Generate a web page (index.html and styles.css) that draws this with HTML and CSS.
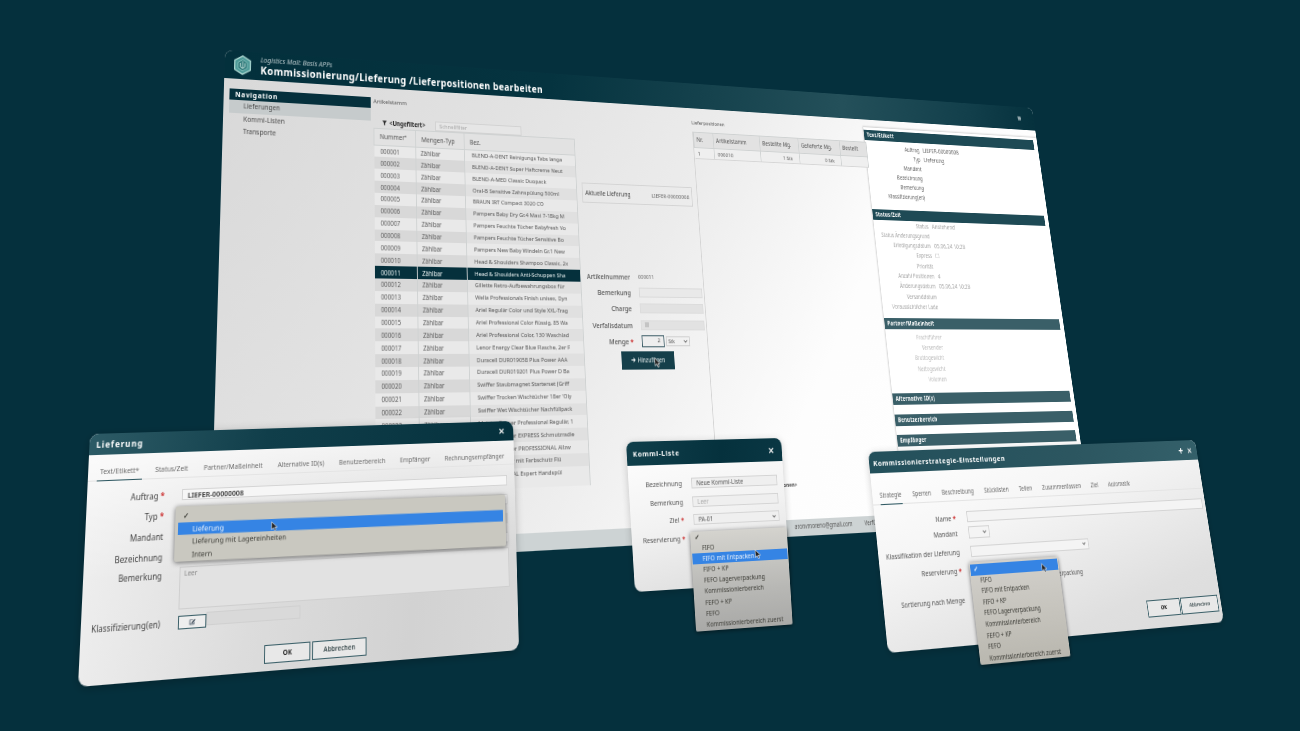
FILE: index.html
```html
<!DOCTYPE html>
<html lang="de">
<head>
<meta charset="utf-8">
<title>Logistics Mall</title>
<link rel="stylesheet" href="styles.css">
</head>
<body>
<div class="stage">

<section class="win win-main">
  <header class="main-head">
    <svg class="logo" viewBox="0 0 24 24"><path d="M12 1 22 6.500V17.500L12 23 2 17.500V6.500Z" fill="#4d9a98" stroke="#a7d3cd" stroke-width="1.600"/><path d="M12 5.500 18 9V15.500L12 19 6 15.500V9Z" fill="#2c7778" stroke="#8cc5bf"/><path d="M9 9.500V14L12 16 15 14V9.500M12 7.500V16" fill="none" stroke="#cfe8e2"/></svg>
    <div class="main-titles">
      <div class="main-sub">Logistics Mall: Basis APPs</div>
      <div class="main-title">Kommissionierung/Lieferung /Lieferpositionen bearbeiten</div>
    </div>
    <svg class="menu-ic" viewBox="0 0 6 6"><path d="M0 .8H6M0 2.300H6M0 3.800H6M0 5.300H6" stroke="#e8eeee" stroke-width=".9"/></svg>
  </header>
  <div class="main-body">
    <nav class="sidebar">
      <div class="nav-head">Navigation</div>
      <div class="nav-item nav-on">Lieferungen</div>
      <div class="nav-item">Kommi-Listen</div>
      <div class="nav-item">Transporte</div>
    </nav>
    <div class="stock">
      <div class="pane-label">Artikelstamm</div>
      <div class="filter-row">
        <svg class="funnel" viewBox="0 0 8 8"><path d="M0 .5H8L5 4V8L3 7V4Z" fill="#222"/></svg>
        <span class="filter-name">&lt;Ungefiltert&gt;</span>
        <span class="quick">Schnellfilter</span>
      </div>
      <table class="tbl stock-tbl">
        <thead><tr><th class="c1">Nummer<sup>▴</sup></th><th class="c2">Mengen-Typ</th><th class="c3">Bez.</th></tr></thead>
        <tbody>
          <tr><td>000001</td><td>Zählbar</td><td>BLEND-A-DENT Reinigungs Tabs langa</td></tr>
          <tr><td>000002</td><td>Zählbar</td><td>BLEND-A-DENT Super Haftcreme Neut</td></tr>
          <tr><td>000003</td><td>Zählbar</td><td>BLEND-A-MED Classic Duopack</td></tr>
          <tr><td>000004</td><td>Zählbar</td><td>Oral-B Sensitive Zahnspülung 500ml</td></tr>
          <tr><td>000005</td><td>Zählbar</td><td>BRAUN IRT Compact 3020 CO</td></tr>
          <tr><td>000006</td><td>Zählbar</td><td>Pampers Baby Dry Gr.4 Maxi 7-18kg M</td></tr>
          <tr><td>000007</td><td>Zählbar</td><td>Pampers Feuchte Tücher Babyfresh Vo</td></tr>
          <tr><td>000008</td><td>Zählbar</td><td>Pampers Feuchte Tücher Sensitive Bo</td></tr>
          <tr><td>000009</td><td>Zählbar</td><td>Pampers New Baby Windeln Gr.1 New</td></tr>
          <tr><td>000010</td><td>Zählbar</td><td>Head &amp; Shoulders Shampoo Classic, 2x</td></tr>
          <tr class="sel"><td>000011</td><td>Zählbar</td><td>Head &amp; Shoulders Anti-Schuppen Sha</td></tr>
          <tr><td>000012</td><td>Zählbar</td><td>Gillette Retro-Aufbewahrungsbox für</td></tr>
          <tr><td>000013</td><td>Zählbar</td><td>Wella Professionals Finish unisex, Dyn</td></tr>
          <tr><td>000014</td><td>Zählbar</td><td>Ariel Regulär Color und Style XXL-Trag</td></tr>
          <tr><td>000015</td><td>Zählbar</td><td>Ariel Professional Color flüssig, 85 Wa</td></tr>
          <tr><td>000016</td><td>Zählbar</td><td>Ariel Professional Color, 130 Waschlad</td></tr>
          <tr><td>000017</td><td>Zählbar</td><td>Lenor Energy Clear Blue Flasche, 2er F</td></tr>
          <tr><td>000018</td><td>Zählbar</td><td>Duracell DUR019058 Plus Power AAA</td></tr>
          <tr><td>000019</td><td>Zählbar</td><td>Duracell DUR019201 Plus Power D Ba</td></tr>
          <tr><td>000020</td><td>Zählbar</td><td>Swiffer Staubmagnet Starterset (Griff</td></tr>
          <tr><td>000021</td><td>Zählbar</td><td>Swiffer Trocken Wischtücher 18er 'Oly</td></tr>
          <tr><td>000022</td><td>Zählbar</td><td>Swiffer Wet Wischtücher Nachfüllpack</td></tr>
          <tr><td>000023</td><td>Zählbar</td><td>Meister Proper Professional Regulär, 1</td></tr>
          <tr><td>000024</td><td>Zählbar</td><td>Meister Proper EXPRESS Schmutzradie</td></tr>
          <tr><td>000025</td><td>Zählbar</td><td>Meister Proper PROFESSIONAL Allzw</td></tr>
          <tr><td>000026</td><td>Zählbar</td><td>Kalkentferner mit Farbschutz Flü</td></tr>
          <tr><td>000027</td><td>Zählbar</td><td>PROFESSIONAL Expert Handspül</td></tr>
        </tbody>
      </table>
    </div>
    <div class="center">
      <div class="current"><span>Aktuelle Lieferung</span><span class="current-val">LIEFER-00000008</span></div>
      <div class="pos-form">
        <label>Artikelnummer</label><span class="val">000011</span>
        <label>Bemerkung</label><span class="fld"></span>
        <label>Charge</label><span class="fld fld-dim"></span>
        <label>Verfallsdatum</label><span class="fld fld-dim"><i class="cal"></i></span>
        <label>Menge <b class="req">*</b></label>
        <span class="qty"><span class="qty-in">2</span><span class="qty-sel">Stk<svg class="chev" viewBox="0 0 8 5"><path d="M1 1 4 4 7 1" fill="none" stroke="#444" stroke-width="1.300"/></svg></span></span>
      </div>
      <div class="add-btn">
        <svg class="add-ic" viewBox="0 0 8 8"><path d="M0 4H7M4 1 7 4 4 7" fill="none" stroke="#fff" stroke-width="1.400"/></svg>Hinzufügen
        <svg class="cur cur-add" viewBox="0 0 10 14"><path d="M1 1V12L4 9.500 6 13.500 8 12.500 6 8.800H10Z" fill="#222" stroke="#fff" stroke-width=".8"/></svg>
      </div>
    </div>
    <div class="list">
      <div class="pane-label">Lieferpositionen</div>
      <div class="list-frame">
        <table class="tbl list-tbl">
          <thead><tr><th class="l1">Nr.</th><th class="l2">Artikelstamm</th><th class="l3">Bestellte Mg.</th><th class="l4">Gelieferte Mg.</th><th class="l5">Bestellt</th></tr></thead>
          <tbody><tr><td>1</td><td>000010</td><td class="num">1 Stk</td><td class="num">0 Stk</td><td></td></tr></tbody>
        </table>
        <div class="list-note">&lt;Alle Lieferpositionen&gt;</div>
      </div>
    </div>
    <aside class="detail">
      <h3 class="bar bar-dark">Text/Etikett</h3>
      <div class="rows rows-1">
        <div class="dr"><span>Auftrag</span><em>LIEFER-00000008</em></div>
        <div class="dr"><span>Typ</span><em>Lieferung</em></div>
        <div class="dr"><span>Mandant</span><em></em></div>
        <div class="dr"><span>Bezeichnung</span><em></em></div>
        <div class="dr"><span>Bemerkung</span><em></em></div>
        <div class="dr"><span>Klassifizierung(en)</span><em></em></div>
      </div>
      <h3 class="bar bar-dark">Status/Zeit</h3>
      <div class="rows rows-2">
        <div class="dr"><span>Status</span><em>Anstehend</em></div>
        <div class="dr"><span>Status Änderungsgrund</span><em></em></div>
        <div class="dr"><span>Erledigungsdatum</span><em>05.06.24 10:28</em></div>
        <div class="dr"><span>Express</span><em>☐</em></div>
        <div class="dr"><span>Priorität</span><em></em></div>
        <div class="dr"><span>Anzahl Positionen</span><em>4</em></div>
        <div class="dr"><span>Änderungsdatum</span><em>05.06.24 10:28</em></div>
        <div class="dr"><span>Versanddatum</span><em></em></div>
        <div class="dr"><span>Voraussichtlicher Lade</span><em></em></div>
      </div>
      <h3 class="bar">Partner/Maßeinheit</h3>
      <div class="rows rows-3">
        <div class="dr"><span>Frachtführer</span><em></em></div>
        <div class="dr"><span>Versender</span><em></em></div>
        <div class="dr"><span>Bruttogewicht</span><em></em></div>
        <div class="dr"><span>Nettogewicht</span><em></em></div>
        <div class="dr"><span>Volumen</span><em></em></div>
      </div>
      <h3 class="bar bar-gap">Alternative ID(s)</h3>
      <h3 class="bar bar-gap">Benutzerbereich</h3>
      <h3 class="bar bar-gap">Empfänger</h3>
    </aside>
  </div>
  <footer class="main-foot"><span>aronvmoreno@gmail.com</span><span class="foot-2">Verfügbarkeit</span></footer>
</section>

<section class="win dlg-a">
  <header class="dlg-head head-a"><span class="dlg-title t-a">Lieferung</span><span class="x x-a">✕</span></header>
  <div class="tabs tabs-a">
    <span class="tab on">Text/Etikett*</span><span class="tab">Status/Zeit</span><span class="tab">Partner/Maßeinheit</span><span class="tab">Alternative ID(s)</span><span class="tab">Benutzerbereich</span><span class="tab">Empfänger</span><span class="tab">Rechnungsempfänger</span>
  </div>
  <div class="form-a">
    <label>Auftrag <b class="req">*</b></label><div class="inp inp-strong">LIEFER-00000008</div>
    <label>Typ <b class="req">*</b></label><div class="inp"></div>
    <label>Mandant</label><div class="inp inp-gray"></div>
    <label>Bezeichnung</label><div class="inp"></div>
    <label class="top">Bemerkung</label><div class="area">Leer</div>
    <label>Klassifizierung(en)</label>
    <div class="klass"><span class="edit-btn"><svg viewBox="0 0 10 10"><path d="M1 2H6V3H2V8H7V5H8V9H1Z" fill="#345"/><path d="M4 6 8.500 1.500 9.500 2.500 5 7H4Z" fill="#123"/></svg></span><span class="klass-f"></span></div>
  </div>
  <div class="btns btns-a"><span class="btn btn-ok">OK</span><span class="btn">Abbrechen</span></div>
  <div class="drop drop-a">
    <div class="opt chk">✓</div>
    <div class="opt hi">Lieferung</div>
    <div class="opt">Lieferung mit Lagereinheiten</div>
    <div class="opt">Intern</div>
    <svg class="cur cur-a" viewBox="0 0 10 14"><path d="M1 1V12L4 9.500 6 13.500 8 12.500 6 8.800H10Z" fill="#222" stroke="#fff" stroke-width=".8"/></svg>
  </div>
</section>

<section class="win dlg-b">
  <header class="dlg-head head-b"><span class="dlg-title t-b">Kommi-Liste</span><span class="x x-b">✕</span></header>
  <div class="form-b">
    <label>Bezeichnung</label><div class="inp">Neue Kommi-Liste</div>
    <label>Bemerkung</label><div class="inp inp-ph">Leer</div>
    <label>Ziel <b class="req">*</b></label><div class="inp inp-sel">PA-01<svg class="chev" viewBox="0 0 8 5"><path d="M1 1 4 4 7 1" fill="none" stroke="#444" stroke-width="1.300"/></svg></div>
    <label>Reservierung <b class="req">*</b></label><div></div>
  </div>
  <div class="drop drop-b">
    <div class="opt chk">✓</div>
    <div class="opt">FIFO</div>
    <div class="opt hi">FIFO mit Entpacken</div>
    <div class="opt">FIFO + KP</div>
    <div class="opt">FEFO Lagerverpackung</div>
    <div class="opt">Kommissionierbereich</div>
    <div class="opt">FEFO + KP</div>
    <div class="opt">FEFO</div>
    <div class="opt">Kommissionierbereich zuerst</div>
    <svg class="cur cur-b" viewBox="0 0 10 14"><path d="M1 1V12L4 9.500 6 13.500 8 12.500 6 8.800H10Z" fill="#222" stroke="#fff" stroke-width=".8"/></svg>
  </div>
</section>

<section class="win dlg-c">
  <header class="dlg-head head-c"><span class="dlg-title t-c">Kommissionierstrategie-Einstellungen</span><span class="plus">+</span><span class="x x-c">✕</span></header>
  <div class="tabs tabs-c">
    <span class="tab on">Strategie</span><span class="tab">Sperren</span><span class="tab">Beschreibung</span><span class="tab">Stücklisten</span><span class="tab">Teilen</span><span class="tab">Zusammenfassen</span><span class="tab">Ziel</span><span class="tab">Automatik</span>
  </div>
  <div class="form-c">
    <label>Name <b class="req">*</b></label><div class="inp"></div>
    <label>Mandant</label><div class="inp inp-sel sel-s"><svg class="chev" viewBox="0 0 8 5"><path d="M1 1 4 4 7 1" fill="none" stroke="#444" stroke-width="1.300"/></svg></div>
    <label>Klassifikation der Lieferung</label><div class="inp inp-sel sel-m"><svg class="chev" viewBox="0 0 8 5"><path d="M1 1 4 4 7 1" fill="none" stroke="#444" stroke-width="1.300"/></svg></div>
    <label>Reservierung <b class="req">*</b></label><div class="behind">FIFO Lagerverpackung</div>
    <label>Sortierung nach Menge</label><div></div>
  </div>
  <div class="btns btns-c"><span class="btn btn-ok">OK</span><span class="btn">Abbrechen</span></div>
  <div class="drop drop-c">
    <div class="opt chk hi">✓</div>
    <div class="opt">FIFO</div>
    <div class="opt">FIFO mit Entpacken</div>
    <div class="opt">FIFO + KP</div>
    <div class="opt">FEFO Lagerverpackung</div>
    <div class="opt">Kommissionierbereich</div>
    <div class="opt">FEFO + KP</div>
    <div class="opt">FEFO</div>
    <div class="opt">Kommissionierbereich zuerst</div>
    <svg class="cur cur-c" viewBox="0 0 10 14"><path d="M1 1V12L4 9.500 6 13.500 8 12.500 6 8.800H10Z" fill="#222" stroke="#fff" stroke-width=".8"/></svg>
  </div>
</section>

</div>
</body>
</html>
```
FILE: styles.css
```css
* { box-sizing: border-box; }
html, body { margin: 0; padding: 0; background: #05303d; }
body { font-family: "Noto Sans", "Open Sans", sans-serif; color: #444; }
.stage { position: relative; width: 1300px; height: 731px; overflow: hidden; background: #05303d; }
h3 { margin: 0; }
label { display: block; }

/* Every window is a flat box taken into its place on the canvas by a projective matrix */
.win { position: absolute; left: 0; top: 0; transform-origin: 0 0; filter: blur(.5px); }
.win-main {
  width: 1060px; height: 470px; display: flex; flex-direction: column;
  border-radius: 8px 8px 0 0; overflow: hidden;
  background: linear-gradient(125deg, #d8d8d8 0%, #e2e2e2 25%, #ececec 45%, #fdfdfd 66%, #fff 100%);
  transform: matrix3d(1.00237,.079943,0,.00023358, -.077426,.980915,0,-.00021677, 0,0,1,0, 225,50,0,1);
}
.dlg-a {
  width: 470px; height: 240px; border-radius: 9px;
  background: linear-gradient(180deg, rgba(255,255,255,.85) 0%, rgba(255,255,255,.3) 35%, rgba(255,255,255,0) 60%), linear-gradient(100deg, #f0f0f0 0%, #dcdcdc 40%, #d2d2d2 75%, #d8d8d8 100%);
  box-shadow: 0 2px 10px rgba(0,0,0,.25);
  transform: matrix3d(1.00696,.060106,0,.00020849, -.063708,.9335,0,-.00017563, 0,0,1,0, 90,434,0,1);
}
.dlg-b {
  width: 185px; height: 150px; border-radius: 8px;
  background: linear-gradient(170deg, #fff 0%, #f2f2f2 50%, #dcdcdc 100%);
  box-shadow: 0 2px 8px rgba(0,0,0,.2);
  transform: matrix3d(1.01303,.076649,0,.00022432, .0498,.99047,0,-.00001607, 0,0,1,0, 626,442,0,1);
}
.dlg-c {
  width: 440px; height: 190px; border-radius: 8px;
  background: linear-gradient(165deg, #fff 0%, #f6f6f6 35%, #dfdfdf 80%, #dcdcdc 100%);
  box-shadow: 0 2px 8px rgba(0,0,0,.2);
  transform: matrix3d(1.01039,.071114,0,.00022361, -.059632,.93663,0,-.00018568, 0,0,1,0, 868,452,0,1);
}

/* Main window */
.main-head {
  flex: 0 0 28px; display: flex; align-items: center; padding: 0 21px 0 9px; gap: 9px;
  background: linear-gradient(97deg, #03303c 0%, #05333f 35%, #24505a 72%, #123f4b 90%, #05313d 100%);
  color: #fff;
}
.logo { width: 20px; height: 20px; flex: none; }
.main-titles { flex: 1; line-height: 1; }
.main-sub { font-size: 7px; font-style: italic; color: #b9c8cb; margin-bottom: 2px; }
.main-title { font-size: 10.400px; font-weight: 700; letter-spacing: .37px; white-space: nowrap; }
.menu-ic { width: 5px; height: 6px; flex: none; }
.main-body { flex: 1; display: flex; min-height: 0; padding-left: 6px; }
.sidebar { flex: 0 0 153px; padding-top: 10px; }
.nav-head {
  height: 11px; line-height: 11px; padding-left: 6px; background: #05303c; color: #fff;
  font-size: 7px; font-weight: 700; letter-spacing: .65px;
}
.nav-item { height: 12.500px; line-height: 12.500px; padding-left: 15px; font-size: 6.800px; color: #4a4a4a; }
.nav-on { background: #c6cbcc; }

.stock { flex: 0 0 236px; min-width: 0; margin-left: 3px; padding-top: 9px; }
.pane-label { height: 11px; line-height: 11px; font-size: 6px; color: #555; }
.filter-row { margin-top: 10px; height: 11px; display: flex; align-items: center; padding-left: 10px; font-size: 5.800px; }
.funnel { width: 5px; height: 5px; margin-right: 3px; }
.filter-name { font-weight: 700; color: #222; width: 52px; font-size: 6.100px; white-space: nowrap; }
.quick {
  width: 102px; height: 10px; line-height: 9px; padding-left: 4px; color: #a9a9a9;
  border: 1px solid #d2d2d2; background: #e6e6e6;
}
.tbl { border-collapse: collapse; table-layout: fixed; }
.tbl th { font-weight: 400; text-align: left; height: 17px; padding: 0 6px; font-size: 6.600px; color: #555; background: #e2e2e2; border: 1px solid #cfd2d2; overflow: hidden; white-space: nowrap; }
.tbl td { height: 11.870px; padding: 0 4px; font-size: 6px; line-height: 11px; color: #5c5c5c; border-right: 1px solid #cfd2d2; overflow: hidden; white-space: nowrap; }
.stock-tbl { width: 236px; }
.stock-tbl td:first-child { font-size: 6.300px; padding-left: 7px; }
.stock-tbl td:nth-child(2) { font-size: 6.300px; padding-left: 5px; }
.stock-tbl td:nth-child(3) { padding-left: 8px; font-size: 6.050px; color: #555; }
.stock-tbl tbody tr:nth-child(odd) td { background: #e9e9e9; }
.stock-tbl tbody tr:nth-child(even) td { background: #d8d8d8; }
.stock-tbl tbody tr:nth-child(even) td:nth-child(3) { background: #e0e0e0; }
.stock-tbl tbody tr.sel td, .stock-tbl tbody tr.sel td:nth-child(3) { background: #05303c; color: #e8f0f0; }
.stock-tbl tbody tr:last-child td { height: 18px; vertical-align: top; }
.c1 { width: 47px; }
.c2 { width: 56px; }
.c3 { width: 133px; }
th sup { font-size: 4px; }

.center { flex: 0 0 140px; min-width: 0; margin-left: 7px; padding-top: 87px; }
.current {
  height: 21px; display: flex; align-items: center; justify-content: space-between; padding: 0 3px;
  font-size: 6.600px; color: #444; border: 1px solid #d4d4d4;
}
.current-val { font-size: 6.100px; color: #666; white-space: nowrap; }
.pos-form {
  margin-top: 66.500px; display: grid; grid-template-columns: 54px 80px; column-gap: 10px;
  grid-auto-rows: 16.400px; align-items: center; font-size: 7.300px; color: #555;
}
.pos-form label { justify-self: end; font-weight: 500; white-space: nowrap; }
.val { font-size: 5.800px; color: #666; }
.fld { height: 10px; border: 1px solid #dadada; background: #e9e9e9; display: block; }
.fld-dim { background: #e2e2e2; border-color: #dcdcdc; }
.cal { display: block; width: 5px; height: 5px; margin: 1.500px 0 0 4px; background: #c4c4c4; }
.req { color: #c33; font-weight: 700; }
.qty { display: flex; gap: 2px; height: 12px; }
.qty-in { width: 28px; border: 1.200px solid #3c5c66; background: #eee; text-align: right; padding-right: 4px; line-height: 9px; font-size: 6px; }
.qty-sel { width: 30px; height: 10px; margin-top: 1px; font-size: 5.500px; line-height: 9px; border: 1px solid #cfcfcf; padding: 0 2px; display: flex; align-items: center; justify-content: space-between; }
.chev { width: 5px; height: 4px; flex: none; margin-left: auto; }
.add-btn {
  position: relative; margin: 1.500px 0 0 38px; width: 65px; height: 18px; display: flex; align-items: center; justify-content: center; gap: 3px;
  background: #153f4a; color: #e8eeee; font-size: 6.200px;
}
.add-ic { width: 5px; height: 5px; }
.cur { position: absolute; width: 7px; height: 10px; }
.cur-add { left: 40px; top: 6px; }

.list { flex: 0 0 241px; min-width: 0; margin-left: 6px; padding-top: 10.500px; display: flex; flex-direction: column; min-height: 0; }
.list .pane-label { font-size: 5.800px; }
.list-frame { flex: 1; margin-top: 4px; border-left: 1px solid #d4d4d4; position: relative; }
.list-tbl { width: 241px; }
.list-tbl th { font-size: 6.600px; padding: 0 3px; }
.list-tbl td { font-size: 6.100px; padding: 0 4px; background: #efefef; border-bottom: 1px solid #d6d6d6; }
.list-tbl .num { text-align: right; padding-right: 9px; }
.l1 { width: 26px; }
.l2 { width: 63px; }
.l3 { width: 54px; }
.l4 { width: 59px; }
.l5 { width: 39px; }
.list-note { position: absolute; left: -1px; top: 362px; width: 101px; text-align: right; font-size: 5.800px; font-weight: 700; color: #444; }

.detail { flex: 1; min-width: 0; margin-top: 9px; padding: 3px 6px 0 0; background: #fff; overflow: hidden; box-shadow: -1px -1px 2px rgba(0,0,0,.18); }
.bar { height: 12px; line-height: 12px; padding-left: 4px; font-size: 6.400px; font-weight: 700; letter-spacing: .2px; color: #fff; background: #3a5f68; }
.bar-dark { background: #1e4a55; }
.bar-gap { margin-top: 9.500px; }
.rows { font-size: 6.300px; }
.rows-1 { padding: 3px 0 9px; color: #666; }
.rows-2 { padding: 0 0 7px; color: #a6a6a6; }
.rows-3 { padding: 3px 0 0; color: #bdbdbd; }
.dr { display: grid; grid-template-columns: 80px 1fr; column-gap: 5px; height: 11.100px; line-height: 11.100px; }
.dr span { justify-self: end; white-space: nowrap; }
.dr em { font-style: normal; white-space: nowrap; font-size: 6.900px; }
.rows-2 .dr { height: 11.300px; line-height: 11.300px; }

.main-foot { flex: 0 0 16px; display: flex; align-items: center; padding: 0 0 3px 644px; gap: 16px; background: #cdd3d4; font-size: 6.200px; color: #555; }

/* Dialog chrome */
.dlg-head { height: 21px; display: flex; align-items: center; justify-content: space-between; padding: 0 6px 0 7px; color: #fff; }
.head-a { border-radius: 9px 9px 0 0; background: linear-gradient(100deg, #2d5b66 0%, #103e4a 40%, #05313d 100%); padding-right: 10px; }
.head-b { height: 24px; background: linear-gradient(100deg, #103f4b 0%, #05313d 60%, #0a3743 100%); border-radius: 8px 8px 0 0; padding-right: 9px; }
.head-c { background: linear-gradient(100deg, #23505b 0%, #2c5660 60%, #34606a 100%); border-radius: 8px 8px 0 0; padding-left: 5px; padding-right: 7px; }
.dlg-title { font-weight: 700; white-space: nowrap; }
.t-a { font-size: 8.300px; letter-spacing: .9px; }
.t-b { font-size: 7.400px; letter-spacing: .75px; }
.t-c { font-size: 7.600px; letter-spacing: .62px; margin-right: auto; }
.x { font-weight: 700; color: #f0f0f0; }
.x-a { font-size: 9px; }
.x-b { font-size: 8.500px; }
.x-c { font-size: 8px; }
.plus { font-size: 12px; line-height: 12px; font-weight: 700; margin-right: 6px; }
.tabs { display: flex; align-items: flex-end; border-bottom: 1px solid #e4e4e4; color: #6a6a6a; }
.tabs-a { height: 26px; padding-left: 12px; gap: 16.500px; font-size: 6.800px; }
.tabs-c { height: 31px; padding-left: 9px; gap: 13.500px; font-size: 6.300px; }
.tab { padding-bottom: 4.500px; white-space: nowrap; border-bottom: 1.500px solid transparent; margin-bottom: -1px; }
.tab.on { border-bottom-color: #2c5660; }
.tabs-a .tab.on { margin-left: -3px; padding: 0 3px 4.500px; margin-right: -3px; }

.form-a { margin-top: 6px; display: grid; grid-template-columns: 79px 364px; column-gap: 18px; grid-template-rows: 20px 20px 20px 20px 47px 14px; align-items: center; font-size: 8px; color: #444; }
.form-a label, .form-b label, .form-c label { justify-self: end; white-space: nowrap; }
.form-a label.top { align-self: start; margin-top: 3px; }
.inp { height: 11px; line-height: 10px; padding-left: 5px; border: 1px solid #d4d4d4; background: #f0f0f0; font-size: 7.300px; }
.inp-strong { font-weight: 600; color: #333; background: #f6f6f6; }
.inp-gray { background: #d2d2d2; }
.area { height: 41px; margin-top: 1px; align-self: start; padding: 1px 4px; border: 1px solid #cfcfcf; font-size: 6.500px; color: #888; background: #e2e2e2; }
.klass { display: flex; height: 13px; }
.edit-btn { width: 29px; height: 13px; border: 1px solid #3a5f68; display: flex; align-items: center; justify-content: center; background: #eee; }
.edit-btn svg { width: 7px; height: 7px; }
.klass-f { width: 99px; height: 13px; margin-top: -2px; background: #d9d9d9; border: 1px solid #d0d0d0; }
.btns { display: flex; gap: 2px; }
.btns-a { justify-content: center; margin-top: 21px; padding-left: 14px; }
.btn { width: 59px; height: 18px; line-height: 16px; text-align: center; border: 1px solid #3a5f68; font-size: 6.500px; font-weight: 600; color: #3d4d50; background: #e8e8e8; }
.btn-ok { width: 49px; font-weight: 700; color: #222; }

.form-b { padding-top: 10px; display: grid; grid-template-columns: 62px 104px; column-gap: 11px; grid-auto-rows: 18.700px; align-items: center; font-size: 7px; color: #555; }
.form-b .inp { font-size: 6.500px; background: #efefef; }
.inp-ph { color: #aaa; }
.inp-sel { display: flex; align-items: center; justify-content: space-between; padding-right: 3px; }

.form-c { margin-top: 7px; display: grid; grid-template-columns: 100px 322px; column-gap: 14px; grid-template-rows: 17px 14px 22px 14px 42px; align-items: center; font-size: 7.100px; color: #555; }
.form-c .inp { background: #f4f4f4; }
.sel-s { width: 27px; height: 12px; background: #e4e4e4; }
.sel-m { width: 155px; height: 11px; background: #e4e4e4; }
.behind { align-self: start; margin-top: 12px; padding-left: 74px; font-size: 6.400px; white-space: nowrap; }
.btns-c { justify-content: flex-end; margin-top: -6px; padding-right: 4px; gap: 1px; }
.btns-c .btn { width: 53px; height: 17px; line-height: 15px; font-size: 5.600px; }
.btns-c .btn-ok { width: 46px; font-size: 6px; }

/* Open select lists */
.drop { position: absolute; border-radius: 2px; color: #3a3a34; box-shadow: 0 1px 5px rgba(0,0,0,.55); }
.opt { padding-left: 15px; white-space: nowrap; }
.hi { background: #3584e4; color: #eaf2fc; }
.chk { padding-left: 5px; font-weight: 700; }
.drop-a { left: 91px; top: 75px; width: 367px; height: 54px; padding: 3px 3px 2px; background: #c9c8c0; font-size: 7.300px; transform-origin: 0 0; transform: skewY(.6deg); }
.drop-a .opt { height: 12.500px; line-height: 12.500px; }
.cur-a { left: 101px; top: 18px; }
.drop-b { left: 68px; top: 93px; width: 117px; height: 101px; padding: 0 1px; font-size: 6.800px; background: linear-gradient(180deg, #d4d3ce 0%, #b8b8b5 60%, #a9a9a7 100%); }
.drop-b .opt { height: 11.100px; line-height: 11.100px; padding-left: 12px; }
.drop-b .chk { padding-left: 4px; }
.cur-b { left: 76px; top: 21px; }
.drop-c { left: 110px; top: 112px; width: 115px; height: 97px; padding: 2px 1px; font-size: 6.700px; background: linear-gradient(180deg, #d2d0cb 0%, #c4c2bb 60%, #b9b7af 100%); }
.drop-c .opt { height: 10.600px; line-height: 10.600px; padding-left: 11px; }
.drop-c .chk { padding-left: 4px; }
.cur-c { left: 92px; top: 5px; }
```
